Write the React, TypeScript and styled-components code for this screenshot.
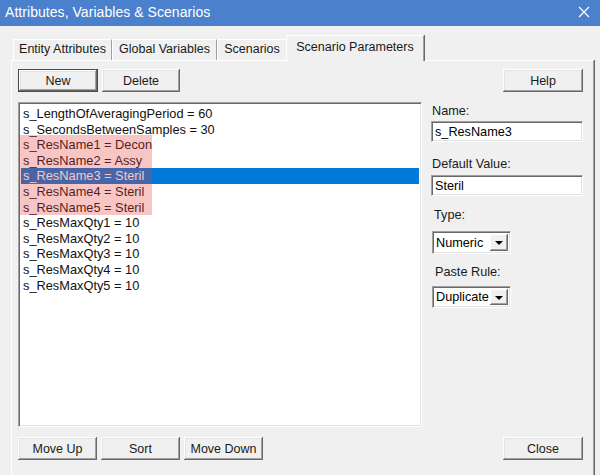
import React from "react";
import styled, { createGlobalStyle, css } from "styled-components";

const GlobalStyle = createGlobalStyle`
  html, body { margin: 0; padding: 0; background: #f0f0f0; }
  body { font-family: "Liberation Sans", Arial, sans-serif; }
  * { box-sizing: border-box; }
`;

const Window = styled.div`
  width: 600px;
  height: 475px;
  overflow: hidden;
  background: #f0f0f0;
  display: flex;
  flex-direction: column;
  color: #000;
`;

const TitleBar = styled.div`
  height: 26px;
  flex: none;
  background: #4a80cc;
  display: flex;
  align-items: center;
  justify-content: space-between;
  padding: 0 10px 3px 5px;
`;

const TitleText = styled.span`
  color: #fff;
  font-size: 14px;
  letter-spacing: 0.05px;
`;

const Body = styled.div`
  flex: 1;
  display: flex;
  flex-direction: column;
  padding: 9px 5px 0 11px;
`;

const TabStrip = styled.div`
  display: flex;
  align-items: flex-end;
  height: 25px;
  padding-left: 2px;
  position: relative;
  z-index: 1;
`;

const Tab = styled.div<{ $w: number; $active?: boolean }>`
  width: ${(p) => p.$w}px;
  height: ${(p) => (p.$active ? 26 : 21)}px;
  margin-bottom: ${(p) => (p.$active ? -1 : 0)}px;
  display: flex;
  align-items: center;
  justify-content: center;
  font-size: 12.5px;
  color: #1a1a1a;
  border-top: 1px solid #fff;
  border-left: 1px solid #fff;
  border-right: 1px solid #a0a0a0;
  box-shadow: 1px 0 0 #696969;
  background: #f0f0f0;
  padding-bottom: ${(p) => (p.$active ? 4 : 2)}px;
  ${(p) =>
    p.$active &&
    css`
      margin-left: -1px;
    `}
`;

const Panel = styled.div`
  flex: 1;
  display: flex;
  flex-direction: column;
  border-top: 1px solid #fff;
  border-left: 1px solid #fff;
  border-right: 1px solid #a0a0a0;
  box-shadow: 1px 0 0 #696969;
  margin-right: 1px;
  padding: 8px 10px 0 6px;
`;

const ButtonRow = styled.div`
  display: flex;
  gap: 4px;
  height: 23px;
  flex: none;
`;

const Spacer = styled.div`
  flex: 1;
`;

const Button = styled.div<{ $w: number; $default?: boolean }>`
  width: ${(p) => p.$w}px;
  height: 23px;
  display: flex;
  align-items: center;
  justify-content: center;
  font-size: 12.5px;
  color: #1a1a1a;
  background: #f0f0f0;
  box-shadow: inset -1px -1px #696969, inset 1px 1px #fff,
    inset -2px -2px #a0a0a0, inset 2px 2px #e3e3e3;
  ${(p) =>
    p.$default &&
    css`
      border: 1px solid #4a4a4a;
    `}
`;

const Main = styled.div`
  display: flex;
  gap: 9px;
  margin: 10px 0;
  height: 325px;
  flex: none;
`;

const ListBox = styled.div`
  position: relative;
  width: 404px;
  height: 325px;
  background: #fff;
  border-top: 1px solid #a0a0a0;
  border-left: 1px solid #a0a0a0;
  border-right: 1px solid #fff;
  border-bottom: 1px solid #fff;
  box-shadow: inset 1px 1px #696969, inset -1px -1px #e3e3e3;
  padding: 3px 2px 2px 2px;
`;

const Item = styled.div<{ $selected?: boolean }>`
  height: 15.6px;
  line-height: 15.6px;
  font-size: 12.8px;
  padding-left: 2px;
  white-space: nowrap;
  background: ${(p) => (p.$selected ? "#0078d7" : "transparent")};
  color: ${(p) => (p.$selected ? "#fff" : "#111")};
`;

const Highlight = styled.div`
  position: absolute;
  left: 1px;
  top: 32px;
  width: 132px;
  height: 80px;
  background: rgba(232, 64, 64, 0.3);
  pointer-events: none;
`;

const SideColumn = styled.div`
  width: 152px;
  display: flex;
  flex-direction: column;
`;

const Label = styled.div<{ $top: number; $indent: number; $gap: number }>`
  font-size: 12.7px;
  color: #1a1a1a;
  height: 16px;
  line-height: 16px;
  margin-top: ${(p) => p.$top}px;
  margin-bottom: ${(p) => p.$gap}px;
  padding-left: ${(p) => p.$indent}px;
`;

const sunken = css`
  background: #fff;
  border-top: 1px solid #a0a0a0;
  border-left: 1px solid #a0a0a0;
  border-right: 1px solid #fff;
  border-bottom: 1px solid #fff;
  box-shadow: inset 1px 1px #696969, inset -1px -1px #e3e3e3;
`;

const TextField = styled.div`
  ${sunken}
  height: 21px;
  width: 152px;
  display: flex;
  align-items: center;
  padding-left: 3px;
  font-size: 12.7px;
`;

const Select = styled.div<{ $h: number }>`
  ${sunken}
  margin-left: 1px;
  width: 79px;
  height: ${(p) => p.$h}px;
  display: flex;
  align-items: stretch;
  padding: 2px;
  font-size: 12.7px;
`;

const SelectValue = styled.div`
  flex: 1;
  display: flex;
  align-items: center;
  padding-left: 1px;
  overflow: hidden;
  white-space: nowrap;
`;

const DropButton = styled.div`
  width: 18px;
  flex: none;
  display: flex;
  align-items: center;
  justify-content: center;
  background: #f0f0f0;
  box-shadow: inset -1px -1px #696969, inset 1px 1px #fff,
    inset -2px -2px #a0a0a0;
`;

const Arrow = styled.div`
  width: 0;
  height: 0;
  border-left: 4px solid transparent;
  border-right: 4px solid transparent;
  border-top: 4px solid #000;
  margin-top: 1px;
`;

const items = [
  "s_LengthOfAveragingPeriod = 60",
  "s_SecondsBetweenSamples = 30",
  "s_ResName1 = Decon",
  "s_ResName2 = Assy",
  "s_ResName3 = Steril",
  "s_ResName4 = Steril",
  "s_ResName5 = Steril",
  "s_ResMaxQty1 = 10",
  "s_ResMaxQty2 = 10",
  "s_ResMaxQty3 = 10",
  "s_ResMaxQty4 = 10",
  "s_ResMaxQty5 = 10",
];

export default function App() {
  return (
    <>
      <GlobalStyle />
      <Window>
        <TitleBar>
          <TitleText>Attributes, Variables &amp; Scenarios</TitleText>
          <svg width="12" height="12" viewBox="0 0 12 12">
            <path d="M1 1 L11 11 M11 1 L1 11" stroke="#fff" strokeWidth="1.2" />
          </svg>
        </TitleBar>
        <Body>
          <TabStrip>
            <Tab $w={99}>Entity Attributes</Tab>
            <Tab $w={105}>Global Variables</Tab>
            <Tab $w={70}>Scenarios</Tab>
            <Tab $w={138} $active>
              Scenario Parameters
            </Tab>
          </TabStrip>
          <Panel>
            <ButtonRow>
              <Button $w={80} $default>
                New
              </Button>
              <Button $w={78}>Delete</Button>
              <Spacer />
              <Button $w={80}>Help</Button>
            </ButtonRow>
            <Main>
              <ListBox>
                {items.map((t, i) => (
                  <Item key={t} $selected={i === 4}>
                    {t}
                  </Item>
                ))}
                <Highlight />
              </ListBox>
              <SideColumn>
                <Label $top={1} $indent={1} $gap={2}>
                  Name:
                </Label>
                <TextField>s_ResName3</TextField>
                <Label $top={14} $indent={1} $gap={3}>
                  Default Value:
                </Label>
                <TextField>Steril</TextField>
                <Label $top={11} $indent={3} $gap={8}>
                  Type:
                </Label>
                <Select $h={23}>
                  <SelectValue>Numeric</SelectValue>
                  <DropButton>
                    <Arrow />
                  </DropButton>
                </Select>
                <Label $top={10} $indent={4} $gap={6}>
                  Paste Rule:
                </Label>
                <Select $h={22}>
                  <SelectValue>Duplicate</SelectValue>
                  <DropButton>
                    <Arrow />
                  </DropButton>
                </Select>
              </SideColumn>
            </Main>
            <ButtonRow>
              <Button $w={79}>Move Up</Button>
              <Button $w={79}>Sort</Button>
              <Button $w={79}>Move Down</Button>
              <Spacer />
              <Button $w={80}>Close</Button>
            </ButtonRow>
          </Panel>
        </Body>
      </Window>
    </>
  );
}
